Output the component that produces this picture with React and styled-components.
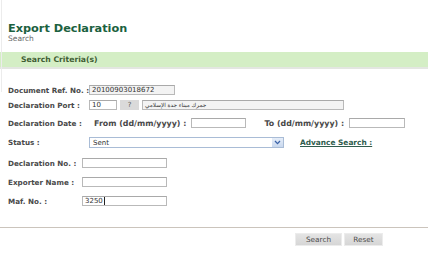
import React from "react";
import styled, { createGlobalStyle } from "styled-components";

const Global = createGlobalStyle`
  html, body { margin: 0; padding: 0; background: #fff; }
  body { font-family: "DejaVu Sans", Verdana, sans-serif; }
`;

const Page = styled.div`
  position: relative;
  width: 428px;
  height: 256px;
  overflow: hidden;
  display: flex;
  flex-direction: column;
`;

const EdgeLine = styled.div`
  position: absolute;
  left: 1px;
  top: 0;
  width: 1px;
  height: 92px;
  background: #ececec;
`;

const Header = styled.div`
  padding: 22px 0 0 8px;
  display: flex;
  flex-direction: column;
`;

const Title = styled.div`
  font-size: 11.3px;
  line-height: 13px;
  font-weight: bold;
  color: #1b6140;
`;

const Subtitle = styled.div`
  font-size: 7.5px;
  line-height: 9px;
  color: #666;
  margin-top: -1px;
`;

const SectionBar = styled.div`
  margin-top: 9px;
  height: 15px;
  line-height: 15px;
  background: #d4eec5;
  border-bottom: 2px solid #e3e6e1;
  padding-left: 21px;
  font-size: 7.7px;
  font-weight: bold;
  color: #3f5d33;
`;

const Form = styled.div`
  display: flex;
  flex-direction: column;
  padding: 16px 0 0 8px;
`;

const Row = styled.div`
  display: flex;
  align-items: center;
  height: ${(p) => p.$h || 10}px;
  margin-top: ${(p) => p.$mt || 0}px;
`;

const Label = styled.div`
  width: ${(p) => p.$w}px;
  flex: none;
  font-size: 7.2px;
  font-weight: bold;
  color: #4a4a4a;
  white-space: nowrap;
`;

const SubLabel = styled.div`
  font-size: 7.9px;
  font-weight: bold;
  color: #4a4a4a;
  white-space: nowrap;
  margin-left: ${(p) => p.$ml || 0}px;
`;

const Field = styled.div`
  box-sizing: border-box;
  width: ${(p) => p.$w}px;
  height: ${(p) => p.$h || 10}px;
  margin-left: ${(p) => p.$ml || 0}px;
  border: 1px solid #b9b9b9;
  border-top-color: #a9a9a9;
  background: ${(p) => (p.$ro ? "#f3f3f3" : "#fff")};
  font-size: ${(p) => p.$fs || 7}px;
  line-height: ${(p) => (p.$h || 10) - 2}px;
  color: #333;
  padding-left: 2px;
  white-space: nowrap;
  overflow: hidden;
  display: flex;
  align-items: center;
`;

const Caret = styled.span`
  display: inline-block;
  width: 1px;
  height: 8px;
  background: #222;
  margin-left: 1px;
`;

const HelpButton = styled.div`
  box-sizing: border-box;
  width: 19px;
  height: 10px;
  margin-left: 3px;
  background: #dadada;
  font-size: 7px;
  line-height: 10px;
  color: #555;
  text-align: center;
`;

const Select = styled.div`
  box-sizing: border-box;
  width: 195px;
  height: 11px;
  border: 1px solid #a9bcd6;
  background: #fff;
  display: flex;
  align-items: center;
  font-size: 7px;
  color: #333;
`;

const SelectText = styled.span`
  flex: 1;
  padding-left: 3px;
`;

const SelectArrow = styled.span`
  width: 11px;
  height: 9px;
  background: linear-gradient(#e6eef9, #c9d8ee);
  display: flex;
  align-items: center;
  justify-content: center;
`;

const Link = styled.a`
  margin-left: 16px;
  font-size: 7.4px;
  font-weight: bold;
  color: #2f5c4d;
  text-decoration: underline;
  white-space: nowrap;
`;

const Rule = styled.div`
  margin-top: 21px;
  height: 1px;
  background: #cbc4bc;
`;

const Actions = styled.div`
  display: flex;
  justify-content: flex-end;
  gap: 2px;
  padding: 5px 45px 0 0;
`;

const Button = styled.div`
  box-sizing: border-box;
  width: ${(p) => p.$w}px;
  height: 13px;
  background: linear-gradient(#e4e4e4, #d6d6d6);
  border: 1px solid #ececec;
  font-size: 7.3px;
  line-height: 11px;
  color: #4d4d4d;
  text-align: center;
`;

export default function App() {
  return (
    <>
      <Global />
      <Page>
        <EdgeLine />
        <Header>
          <Title>Export Declaration</Title>
          <Subtitle>Search</Subtitle>
        </Header>
        <SectionBar>Search Criteria(s)</SectionBar>
        <Form>
          <Row>
            <Label $w={81}>Document Ref. No. :</Label>
            <Field $w={86} $ro>20100903018672</Field>
          </Row>
          <Row $mt={5}>
            <Label $w={81}>Declaration Port :</Label>
            <Field $w={28}>10</Field>
            <HelpButton>?</HelpButton>
            <Field $w={202} $ml={3} $ro $fs={5.7}>
              <span dir="rtl">جمرك ميناء جدة الإسلامي</span>
            </Field>
          </Row>
          <Row $mt={8}>
            <Label $w={86}>Declaration Date :</Label>
            <SubLabel>From (dd/mm/yyyy) :</SubLabel>
            <Field $w={55} $ml={5} />
            <SubLabel $ml={18}>To (dd/mm/yyyy) :</SubLabel>
            <Field $w={56} $ml={5} />
          </Row>
          <Row $mt={9} $h={11}>
            <Label $w={81}>Status :</Label>
            <Select>
              <SelectText>Sent</SelectText>
              <SelectArrow>
                <svg width="7" height="5" viewBox="0 0 7 5">
                  <path d="M1 1 L3.5 3.6 L6 1" fill="none" stroke="#3b63a8" strokeWidth="1.3" />
                </svg>
              </SelectArrow>
            </Select>
            <Link href="#">Advance Search :</Link>
          </Row>
          <Row $mt={10}>
            <Label $w={74}>Declaration No. :</Label>
            <Field $w={85} />
          </Row>
          <Row $mt={9}>
            <Label $w={74}>Exporter Name :</Label>
            <Field $w={85} />
          </Row>
          <Row $mt={9}>
            <Label $w={74}>Maf. No. :</Label>
            <Field $w={85}>
              3250
              <Caret />
            </Field>
          </Row>
        </Form>
        <Rule />
        <Actions>
          <Button $w={47}>Search</Button>
          <Button $w={39}>Reset</Button>
        </Actions>
      </Page>
    </>
  );
}
